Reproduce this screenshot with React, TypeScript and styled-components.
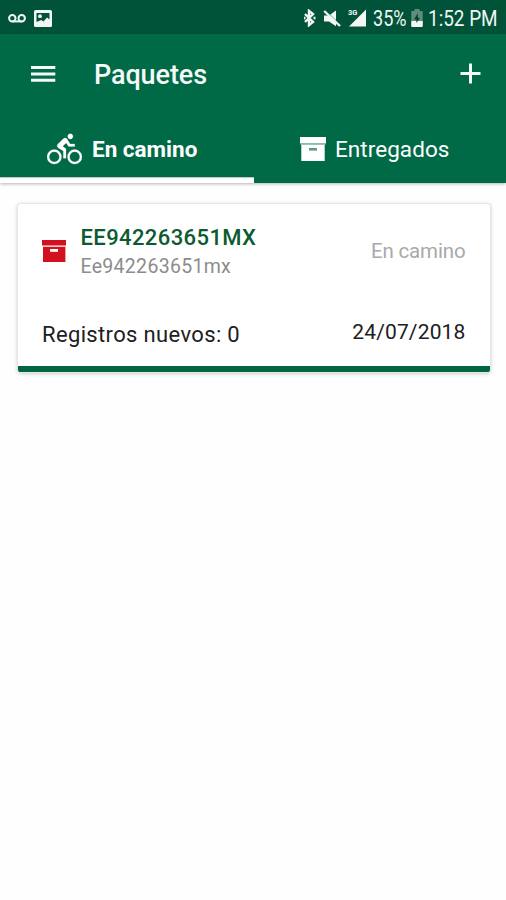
import React from "react";
import styled, { createGlobalStyle } from "styled-components";

const GlobalStyle = createGlobalStyle`
  * { box-sizing: border-box; }
  body { margin: 0; background: #fefefe; font-family: Roboto, "Liberation Sans", sans-serif; }
  svg { display: block; flex: none; }
`;

const Screen = styled.div`
  width: 506px;
  height: 900px;
  overflow: hidden;
  background: #fefefe;
`;

const StatusBar = styled.div`
  display: flex;
  align-items: center;
  height: 34px;
  padding: 2px 0 0 8px;
  background: #005338;
  color: #f2f6f4;
`;

const StatusGroup = styled.div<{ $start?: number; $gap?: number }>`
  display: flex;
  align-items: center;
  gap: ${(p) => p.$gap ?? 8}px;
  margin-left: ${(p) => p.$start ?? 0}px;
`;

const StatusText = styled.span<{ $width: number; $scale: number; $gap: number }>`
  display: block;
  width: ${(p) => p.$width}px;
  margin: 1px 0 0 ${(p) => p.$gap}px;
  font-size: 21.5px;
  line-height: 32px;
  white-space: nowrap;
  transform: scaleX(${(p) => p.$scale});
  transform-origin: left center;
`;

const Header = styled.header`
  position: relative;
  height: 149px;
  background: #006a47;
  color: #fff;
  box-shadow: 0 1px 3px rgba(60, 40, 40, 0.35);
`;

const AppBar = styled.div`
  display: flex;
  align-items: center;
  height: 81px;
  padding: 0 25px 0 31px;
`;

const Title = styled.h1`
  flex: 1;
  margin: 1px 0 0 38px;
  font-size: 27px;
  font-weight: 500;
  line-height: 36px;
  letter-spacing: -0.1px;
  color: #f4faf7;
`;

const IconButton = styled.button`
  padding: 0 0 2px;
  border: 0;
  background: none;
  color: #f4faf7;
`;

const Tabs = styled.nav`
  display: grid;
  grid-template-columns: 254px 252px;
  height: 68px;
`;

const Tab = styled.div<{ $active?: boolean }>`
  display: flex;
  align-items: center;
  gap: ${(p) => (p.$active ? 10 : 9)}px;
  height: 68px;
  padding-left: ${(p) => (p.$active ? 47 : 46)}px;
  padding-bottom: ${(p) => (p.$active ? 0 : 1)}px;
  box-shadow: ${(p) => (p.$active ? "inset 0 -5px #fff, inset 0 -6px #b9cbc3" : "none")};
  font-size: 22.5px;
  font-weight: ${(p) => (p.$active ? 700 : 400)};
  line-height: 30px;
`;

const TabLabel = styled.span<{ $spacing: number }>`
  letter-spacing: ${(p) => p.$spacing}px;
`;

const Card = styled.article`
  display: flex;
  flex-direction: column;
  width: 471.5px;
  height: 168px;
  margin: 21px 0 0 18px;
  padding: 19px 24px 0;
  background: #fff;
  border-bottom: 6px solid #00663f;
  border-radius: 2px;
  box-shadow: 0 0 0 1px #e6e6e6, 0 1px 4px rgba(0, 0, 0, 0.3);
`;

const PackageRow = styled.div`
  display: flex;
  align-items: center;
  height: 56px;
`;

const PackageInfo = styled.div`
  flex: 1;
  margin: 3px 0 0 14.5px;
`;

const Code = styled.div`
  font-size: 22px;
  font-weight: 500;
  line-height: 28px;
  letter-spacing: 0.4px;
  color: #0c5a31;
`;

const Alias = styled.div`
  font-size: 19.5px;
  line-height: 29px;
  letter-spacing: 0.3px;
  color: #8c8c8c;
`;

const State = styled.div`
  font-size: 20.5px;
  line-height: 28px;
  letter-spacing: -0.15px;
  color: #a9a9a9;
`;

const RecordRow = styled.div`
  display: flex;
  justify-content: space-between;
  align-items: flex-start;
  margin-top: 39px;
  color: #202020;
`;

const RecordCount = styled.div`
  margin-top: 3px;
  font-size: 22px;
  line-height: 28px;
  letter-spacing: 0.35px;
`;

const RecordDate = styled.div`
  font-size: 21px;
  line-height: 28px;
  letter-spacing: 0.15px;
`;

const PackageIcon = styled.svg`
  fill: #d3101f;
  margin-top: -1px;
`;

const BoxIcon = ({ width, height, slot }: { width: number; height: number; slot: string }) => (
  <svg width={width} height={height} viewBox="0 0 26 24" preserveAspectRatio="none" fill="currentColor">
    <path d="M0 0h26v6.6H0z M1.3 8h23.4v16H1.3z" />
    <path d="M0.6 6.6h24.8v1.4H0.6z" fill="#9cc3b5" />
    <path d="M9 11h8v2.6H9z" fill={slot} />
  </svg>
);

const BikeIcon = () => (
  <svg width="35" height="35" viewBox="0 0 24 24" fill="currentColor" stroke="currentColor" strokeWidth="0.15">
    <path d="M5,20.5A3.5,3.5 0 0,1 1.5,17A3.5,3.5 0 0,1 5,13.5A3.5,3.5 0 0,1 8.5,17A3.5,3.5 0 0,1 5,20.5M5,12A5,5 0 0,0 0,17A5,5 0 0,0 5,22A5,5 0 0,0 10,17A5,5 0 0,0 5,12M14.8,10H19V8.2H15.8L13.86,4.93C13.57,4.43 13,4.1 12.4,4.1C11.93,4.1 11.5,4.29 11.2,4.6L7.5,8.29C7.19,8.6 7,9 7,9.5C7,10.13 7.33,10.66 7.85,10.97L11.2,13V18H13V11.5L10.75,9.85L13.07,7.5M19,20.5A3.5,3.5 0 0,1 15.5,17A3.5,3.5 0 0,1 19,13.5A3.5,3.5 0 0,1 22.5,17A3.5,3.5 0 0,1 19,20.5M19,12A5,5 0 0,0 14,17A5,5 0 0,0 19,22A5,5 0 0,0 24,17A5,5 0 0,0 19,12M16,4.8C17,4.8 17.8,4 17.8,3C17.8,2 17,1.2 16,1.2C15,1.2 14.2,2 14.2,3C14.2,4 15,4.8 16,4.8Z" />
  </svg>
);

const VoicemailIcon = () => (
  <svg width="18" height="9" viewBox="0 0 18 9" fill="none" stroke="currentColor" strokeWidth="2">
    <circle cx="4.3" cy="4.2" r="3.2" />
    <circle cx="13.7" cy="4.2" r="3.2" />
    <path d="M4.3 7.4h9.4" />
  </svg>
);

const PictureIcon = () => (
  <svg width="18" height="17" viewBox="0 0 18 17">
    <rect width="18" height="17" rx="1.5" fill="currentColor" />
    <path d="M2.5 3h13v6.5l-2.5-2-3.5 4-2.2-1.6L2.5 12z" fill="#005338" />
    <circle cx="6" cy="6.2" r="1.9" fill="currentColor" />
  </svg>
);

const BluetoothIcon = () => (
  <svg width="13" height="18" viewBox="0 0 13 18" fill="none" stroke="currentColor" strokeWidth="2.4">
    <path d="M2 5l8 8-4 3.2V1.8L10 5l-8 8" />
    <path d="M1 9h1.5M10.5 9H12.5" />
  </svg>
);

const MuteIcon = () => (
  <svg width="18" height="17" viewBox="0 0 18 17" fill="currentColor">
    <path d="M1 5.5h5L13 .5v15.8L6 11.5H1z" />
    <path d="M3.6 1.6l14 13.4" stroke="#005338" strokeWidth="0.9" />
    <path d="M1.2 1l15.8 15" stroke="currentColor" strokeWidth="2.4" />
  </svg>
);

const SignalText = styled.text`
  font: 700 7.5px Roboto, sans-serif;
`;

const SignalIcon = () => (
  <svg width="19" height="18" viewBox="0 0 19 18" fill="currentColor">
    <path d="M18 0.5v17H1z" />
    <path d="M0 0h9.5v7H0z" fill="#005338" />
    <SignalText x="0" y="6">3G</SignalText>
  </svg>
);

const BatteryIcon = () => (
  <svg width="12" height="18" viewBox="0 0 12 18">
    <path d="M3.5 0h5v2H11a.7.7 0 0 1 .7.7V17a1 1 0 0 1-1 1H1.3a1 1 0 0 1-1-1V2.7A.7.7 0 0 1 1 2h2.5z" fill="#5f8d7c" />
    <path d="M.3 12h11.4v5a1 1 0 0 1-1 1H1.3a1 1 0 0 1-1-1z" fill="currentColor" />
    <path d="M6.8 4L3 10.5h2.4V14L9 8.8H6.8z" fill="#063f2c" />
  </svg>
);

const MenuIcon = () => (
  <svg width="25" height="18" viewBox="0 0 25 18" fill="currentColor">
    <path d="M0 1h24.3v3H0zM0 7.4h24.3v3H0zM0 13.8h24.3v3H0z" />
  </svg>
);

const PlusIcon = () => (
  <svg width="21" height="21" viewBox="0 0 21 21" fill="currentColor">
    <path d="M9 .5h3V9h8.5v3H12v8.5H9V12H.5V9H9z" />
  </svg>
);

export default function App() {
  return (
    <>
      <GlobalStyle />
      <Screen>
        <StatusBar>
          <StatusGroup>
            <VoicemailIcon />
            <PictureIcon />
          </StatusGroup>
          <StatusGroup $start={251} $gap={7}>
            <BluetoothIcon />
            <MuteIcon />
            <SignalIcon />
          </StatusGroup>
          <StatusText $width={33} $scale={0.84} $gap={6}>35%</StatusText>
          <StatusGroup $start={5}>
            <BatteryIcon />
          </StatusGroup>
          <StatusText $width={70} $scale={0.88} $gap={5}>1:52 PM</StatusText>
        </StatusBar>
        <Header>
          <AppBar>
            <IconButton aria-label="Menú"><MenuIcon /></IconButton>
            <Title>Paquetes</Title>
            <IconButton aria-label="Agregar"><PlusIcon /></IconButton>
          </AppBar>
          <Tabs>
            <Tab $active>
              <BikeIcon />
              <TabLabel $spacing={0}>En camino</TabLabel>
            </Tab>
            <Tab>
              <BoxIcon width={26} height={24} slot="#5f9c86" />
              <TabLabel $spacing={0.05}>Entregados</TabLabel>
            </Tab>
          </Tabs>
        </Header>
        <Card>
          <PackageRow>
            <PackageIcon width="24" height="22" viewBox="0 0 24 22">
              <path d="M0 0h24v5.4H0z M1 6.8h22.4V22H1z" />
              <path d="M8 9h8v2.8H8z" fill="#fff" />
            </PackageIcon>
            <PackageInfo>
              <Code>EE942263651MX</Code>
              <Alias>Ee942263651mx</Alias>
            </PackageInfo>
            <State>En camino</State>
          </PackageRow>
          <RecordRow>
            <RecordCount>Registros nuevos: 0</RecordCount>
            <RecordDate>24/07/2018</RecordDate>
          </RecordRow>
        </Card>
      </Screen>
    </>
  );
}
